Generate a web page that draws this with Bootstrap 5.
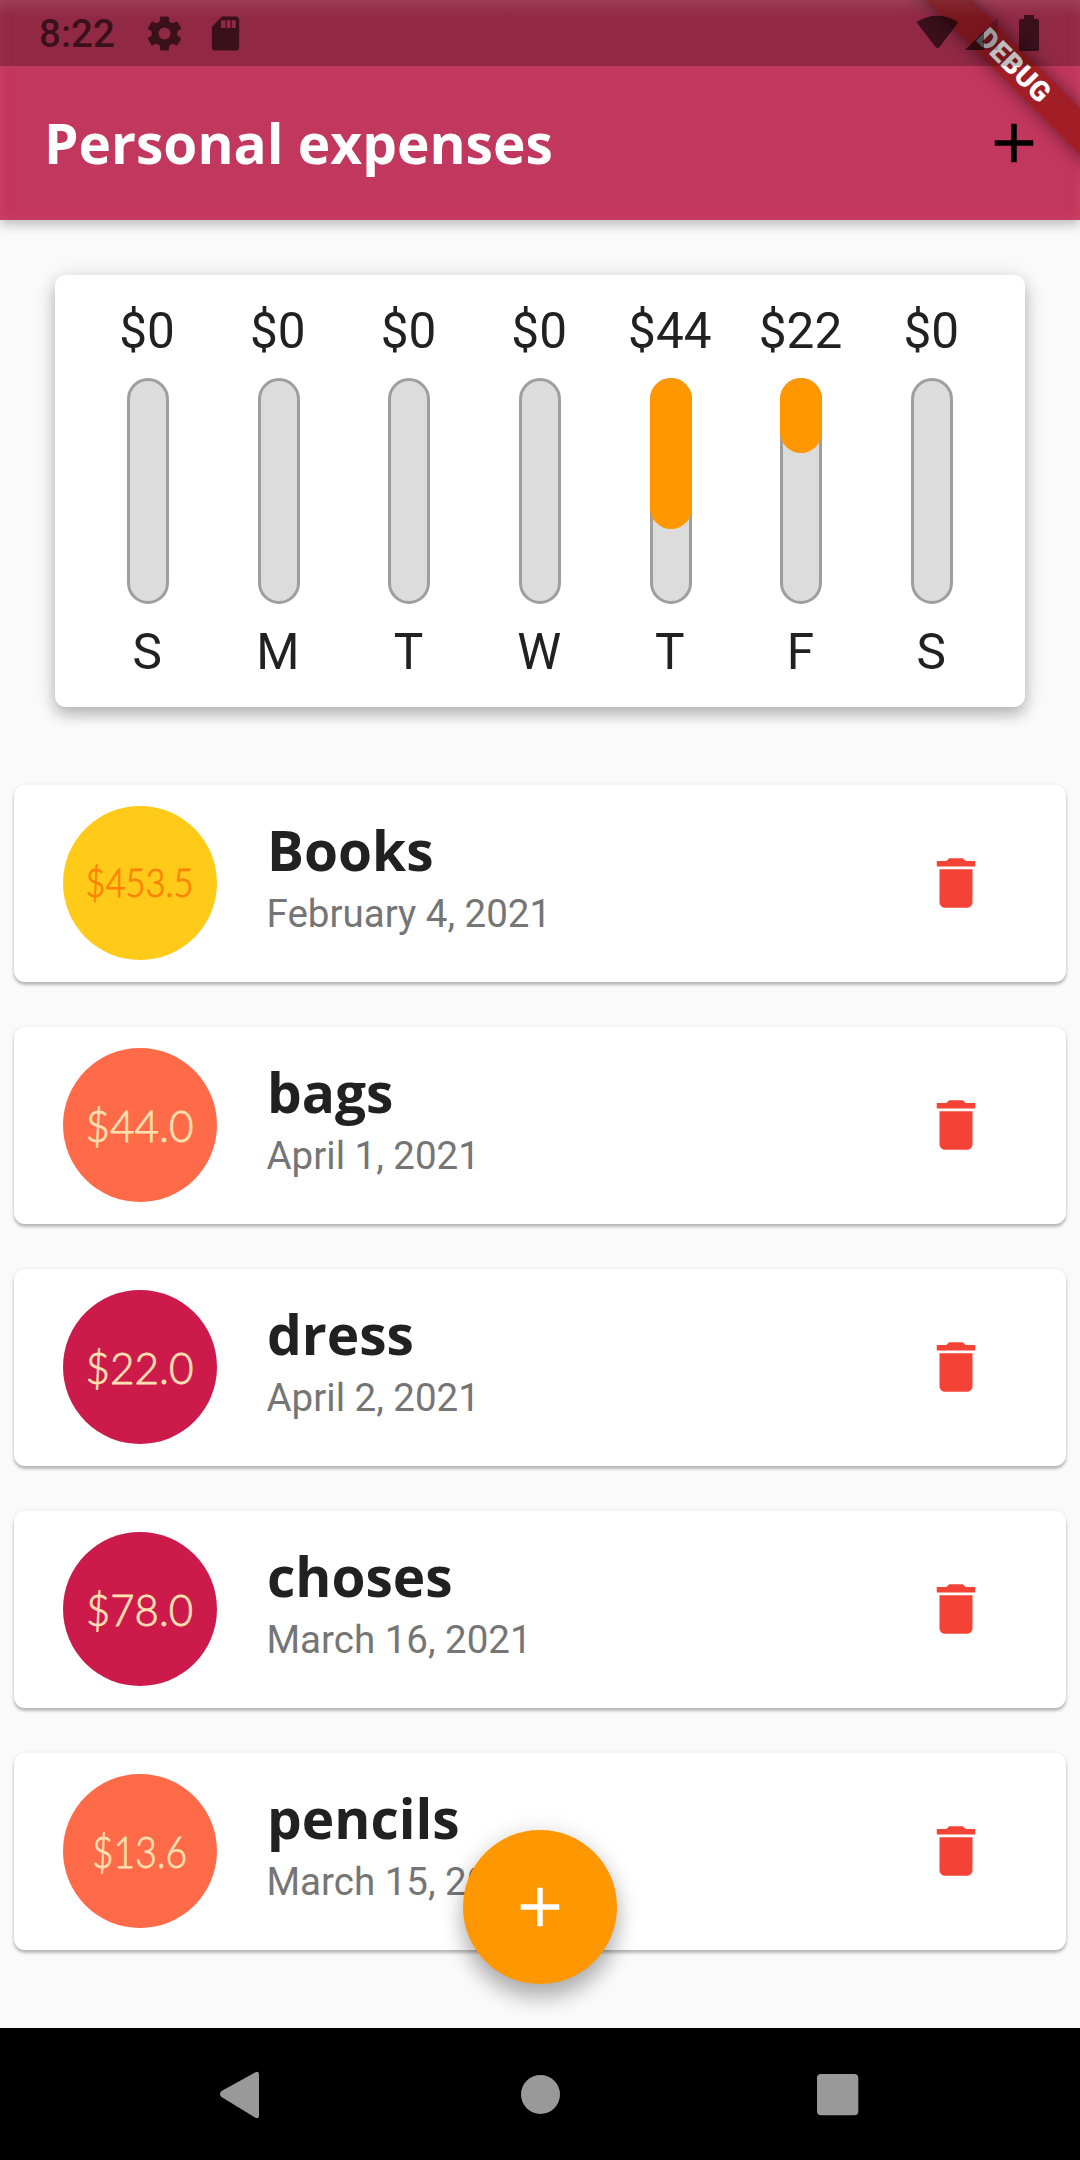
<!DOCTYPE html>
<html lang="en">
<head>
<meta charset="utf-8">
<meta name="viewport" content="width=device-width, initial-scale=1">
<title>Personal expenses</title>
<link href="https://cdn.jsdelivr.net/npm/bootstrap@5.3.0/dist/css/bootstrap.min.css" rel="stylesheet">
<style>
body{background:#fafafa;color:#212121;font-family:Roboto,sans-serif;overflow:hidden}
.screen{width:1080px;height:2160px;overflow:hidden}
.top-area{height:220px;background:#c2375d;box-shadow:inset 0 0 12px rgba(235,90,125,.35),0 5px 10px rgba(0,0,0,.17),0 2px 14px rgba(0,0,0,.11);z-index:1}
.status{height:66px;background:linear-gradient(rgba(255,255,255,.08),rgba(255,255,255,0) 18px),rgba(0,0,0,.25);padding:0 40px 0 39px;z-index:4}
.status,.status svg{color:rgba(0,0,0,.6)}
.clock{font-size:38.5px;font-weight:500;line-height:66px;padding-top:2px;width:90px}
.gear{margin-left:15px}
.sd-card{margin-left:20px}
.app-bar{height:154px;padding:0 33.2px 0 44px}
.open-sans{font-family:"Open Sans",sans-serif;font-weight:700;font-size:55px;letter-spacing:0}
.ribbon-clip{top:0;right:0;width:240px;height:220px;z-index:2}
.ribbon{width:380px;height:33px;left:-16px;top:48.5px;transform:rotate(45deg);background:rgba(160,28,36,.95);box-shadow:0 0 17px rgba(0,0,0,.5);color:#fff;font-weight:900;font-size:28px;line-height:33px;text-align:center;letter-spacing:.4px}
.chart{margin:55px 55px 0;height:432px;border:0;border-radius:11px;background:#fff;padding:28px 27.5px 0;box-shadow:0 8px 14px rgba(0,0,0,.2),0 3px 22px rgba(0,0,0,.14)}
.day{font-size:49.5px;line-height:57px;width:130.7px}
.day span{padding-right:1.5px}
.bar-track{width:42px;height:226px;background:#dcdcdc;border:3px solid #9e9e9e;border-radius:21px;margin:17.5px 0 20px}
.bar-fill{background:#ff9800;border-radius:21px;margin:-3px}
.list{padding:77.5px 14px 0;gap:44.5px}
.item{height:197.5px;border:0;border-radius:11px;background:#fff;padding:0 77px 0 49px;box-shadow:0 3px 3px rgba(0,0,0,.22),0 1px 5px rgba(0,0,0,.1)}
.avatar{width:154px;height:154px}
.avatar text{font-family:Lato,sans-serif;font-weight:300;stroke-width:.8px}
.texts{margin-left:50px;padding-bottom:11px}
.item-title{line-height:66px;margin-top:-2px}
.item-date{font-size:38.5px;line-height:45px;color:#757575;margin-top:8px;margin-left:-.5px}
.fab{width:154px;height:154px;left:463px;top:1830px;background:#ff9800;box-shadow:0 16px 20px rgba(0,0,0,.2),0 4px 24px rgba(0,0,0,.18);z-index:3}
.nav-keys{height:132px;background:#000;z-index:4;bottom:0}
</style>
<script src="https://cdn.jsdelivr.net/npm/bootstrap@5.3.0/dist/js/bootstrap.bundle.min.js"></script>
</head>
<body>
<div class="screen position-relative">
  <header class="top-area position-relative">
    <div class="status position-relative d-flex align-items-center">
      <span class="clock">8:22</span>
      <svg class="gear" width="41" height="41" viewBox="0 0 24 24" fill="currentColor"><path d="M19.43 12.98c.04-.32.07-.64.07-.98s-.03-.66-.07-.98l2.11-1.65c.19-.15.24-.42.12-.64l-2-3.46c-.12-.22-.39-.3-.61-.22l-2.49 1c-.52-.4-1.08-.73-1.69-.98l-.38-2.65C14.460 2.180 14.250 2 14 2h-4c-.25 0-.46.18-.49.42l-.38 2.65c-.61.25-1.170.59-1.690.98l-2.490-1c-.23-.09-.49 0-.61.22l-2 3.460c-.13.22-.07.49.12.64l2.110 1.650c-.04.32-.07.65-.07.98s.03.66.07.98l-2.110 1.650c-.19.15-.24.42-.12.64l2 3.460c.12.22.39.3.61.22l2.490-1c.52.4 1.080.73 1.690.98l.38 2.650c.03.24.24.42.49.42h4c.25 0 .46-.18.49-.42l.38-2.650c.61-.25 1.170-.59 1.690-.98l2.490 1c.23.09.49 0 .61-.22l2-3.460c.12-.22.07-.49-.12-.64l-2.110-1.650zM12 15.500a3.500 3.500 0 1 1 0-7 3.500 3.500 0 0 1 0 7z"/></svg>
      <svg class="sd-card" width="41" height="41" viewBox="0 0 24 24" fill="currentColor"><path d="M18 2h-8L4 8v12c0 1.100.9 2 2 2h12c1.100 0 2-.9 2-2V4c0-1.100-.9-2-2-2zm-6 6.800h-2.600V4.300h2.600zm3 0h-2.300V4.300h2.300zm3 0h-2.300V4.300h2.300z"/></svg>
      <svg class="ms-auto" width="124" height="38" viewBox="0 0 124 38" fill="currentColor"><path d="M1.500 9.500q-1-1 0-2Q21-4 41.500 7.500q1 1 0 2L23.500 33q-2 2-4 0Z"/><path d="M49 36 68 17V36Z"/><path opacity=".3" d="M68 17 82 3V36H68Z"/><path d="M108 1h10v4h3q2 0 2 2v28q0 2-2 2h-16q-2 0-2-2V7q0-2 2-2h3z"/></svg>
    </div>
    <div class="app-bar d-flex align-items-center justify-content-between">
      <h1 class="open-sans text-white mb-0">Personal expenses</h1>
      <svg width="66" height="66" viewBox="0 0 24 24"><path d="M19 13h-6v6h-2v-6H5v-2h6V5h2v6h6z"/></svg>
    </div>
    <div class="ribbon-clip position-absolute overflow-hidden"><div class="ribbon position-absolute">DEBUG</div></div>
  </header>

  <section class="chart card flex-row" id="chart"></section>
  <main class="list d-flex flex-column" id="list"></main>

  <button class="fab btn rounded-circle border-0 p-0 position-absolute d-flex align-items-center justify-content-center" aria-label="Add">
    <svg width="66" height="66" viewBox="0 0 24 24" fill="#fff"><path d="M19 13h-6v6h-2v-6H5v-2h6V5h2v6h6z"/></svg>
  </button>
  <nav class="nav-keys position-absolute w-100">
    <svg width="1080" height="132" fill="#999"><path d="M221.500 63 255 44.500q4-2 4 2v41q0 4-4 2L221.500 69q-3-3 0-6z"/><circle cx="540.500" cy="66.500" r="19.500"/><rect x="817" y="46" width="41.300" height="41.300" rx="4"/></svg>
  </nav>
</div>
<script>
const days=[['S',0,0],['M',0,0],['T',0,0],['W',0,0],['T',44,151],['F',22,75.5],['S',0,0]];
document.getElementById('chart').innerHTML=days.map(([d,v,h])=>`<div class="day d-flex flex-column align-items-center"><span>$${v}</span><div class="bar-track">${h?`<div class="bar-fill" style="height:${h}px"></div>`:''}</div><span>${d}</span></div>`).join('');
const items=[['Books','February 4, 2021','$453.5','#ffca18','#ff8000',38.5,108],['bags','April 1, 2021','$44.0','#ff6b48','#ffe0b2',43.5,108],['dress','April 2, 2021','$22.0','#cc1a4b','#ffe0b2',43.5,108],['choses','March 16, 2021','$78.0','#cc1a4b','#ffe0b2',43.5,107],['pencils','March 15, 2021','$13.6','#ff6b48','#ffe0b2',43.5,95]];
document.getElementById('list').innerHTML=items.map(([t,d,a,bg,fg,s,w])=>`<article class="item card flex-row align-items-center"><svg class="avatar" viewBox="0 0 154 154"><circle cx="77" cy="77" r="77" fill="${bg}"/><text x="76.5" y="${s>40?94:91}" text-anchor="middle" font-size="${s}" fill="${fg}" stroke="${fg}" textLength="${w}" lengthAdjust="spacingAndGlyphs">${a}</text></svg><div class="texts"><h2 class="item-title open-sans mb-0">${t}</h2><div class="item-date">${d}</div></div><svg class="ms-auto" width="66" height="66" viewBox="0 0 24 24" fill="#f44336"><path d="M6 19c0 1.100.9 2 2 2h8c1.100 0 2-.9 2-2V7H6v12zM19 4h-3.500l-1-1h-5l-1 1H5v2h14V4z"/></svg></article>`).join('');
</script>
</body>
</html>
